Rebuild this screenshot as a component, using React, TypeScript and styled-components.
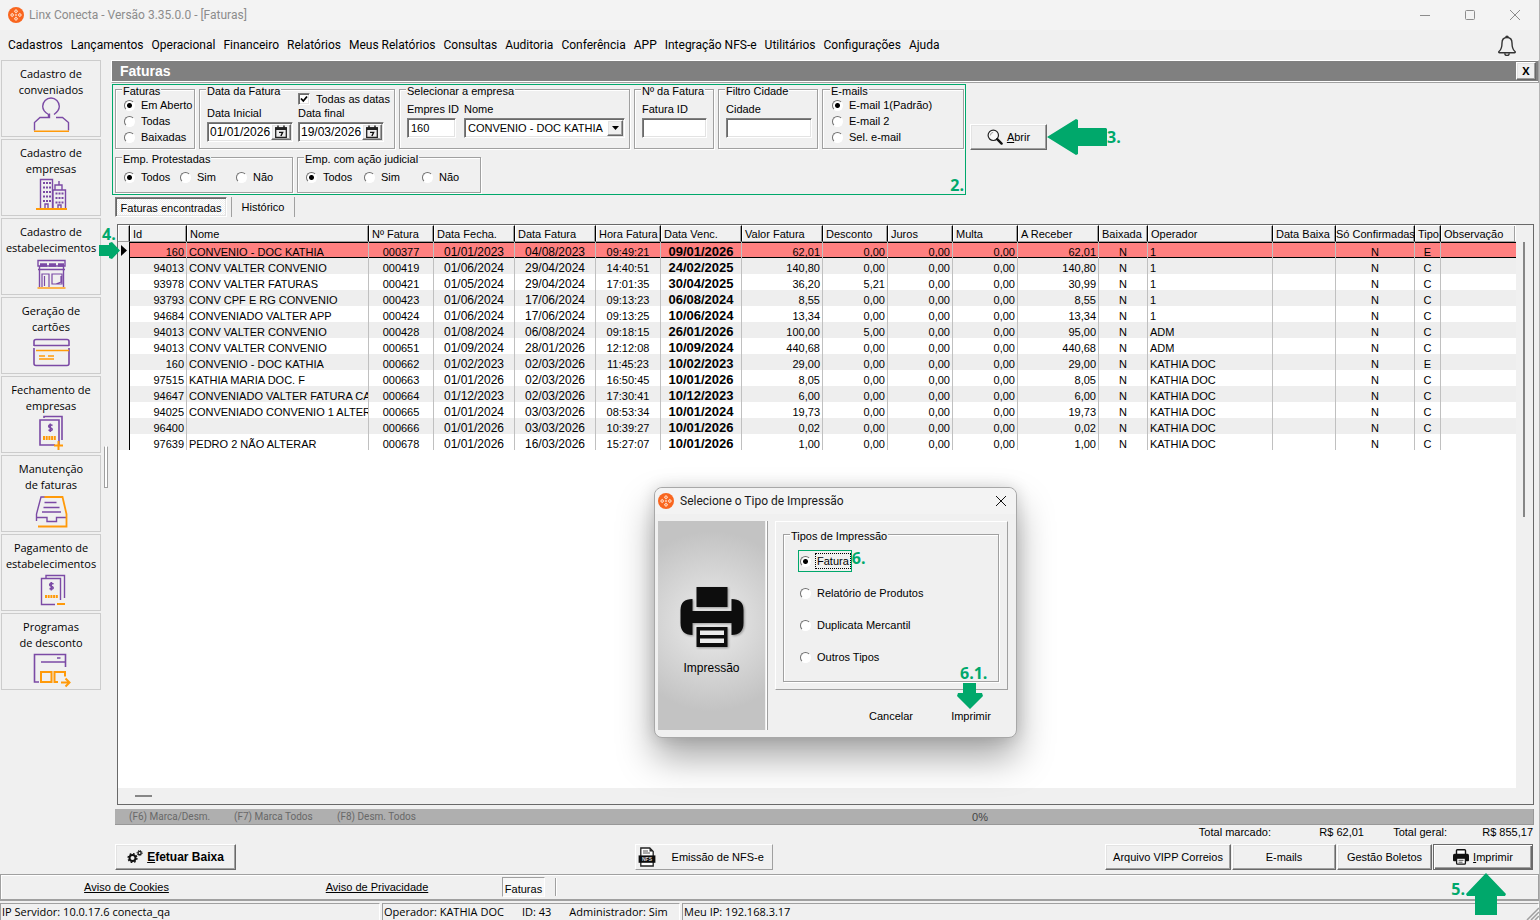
import React from "react";
import styled, { createGlobalStyle, css } from "styled-components";

const UI = `"Liberation Sans", Arial, sans-serif`;
const SEGOE = `"Open Sans", "Noto Sans", sans-serif`;
const CAPTION = `Roboto, "Open Sans", sans-serif`;
const GREEN = "#00a86b";
const FACE = "#f0f0f0";

const Global = createGlobalStyle`
  *, *::before, *::after { box-sizing: border-box; }
  body { margin: 0; background: ${FACE}; color: #000; font: 11px/14px ${UI}; }
  button, input, select { font: inherit; color: inherit; margin: 0; }
`;

const raised = css`
  border: 1px solid;
  border-color: #fff #696969 #696969 #fff;
  box-shadow: inset -1px -1px 0 #a0a0a0, inset 1px 1px 0 #e3e3e3;
`;
const sunken = css`
  border: 1px solid;
  border-color: #808080 #fff #fff #808080;
  box-shadow: inset 1px 1px 0 #696969, inset -1px -1px 0 #e3e3e3;
`;

/* ---------- window frame ---------- */
const Window = styled.div`
  min-height: 100vh;
  display: flex;
  flex-direction: column;
  position: relative;
  border-right: 1px solid #b4b4b4;
  overflow: hidden;
`;
const TitleBar = styled.header`
  height: 30px;
  display: flex;
  align-items: center;
  gap: 5px;
  padding-left: 8px;
  background: #f3f3f3;
  color: #8c8c8c;
  font: 12px/16px ${CAPTION};
`;
const WindowButtons = styled.div`
  margin-left: auto;
  display: flex;
  padding-right: 2px;
`;
const CaptionButton = styled.button`
  width: 45px;
  height: 28px;
  border: 0;
  padding: 0;
  background: none;
  display: grid;
  place-items: center;
`;
const MenuBar = styled.nav`
  height: 30px;
  display: flex;
  align-items: center;
  gap: 8px;
  padding: 0 20px 0 8px;
  font: 12px/16px ${CAPTION};
`;
const MenuItem = styled.a`
  color: #000;
  text-decoration: none;
  white-space: nowrap;
`;
const BellButton = styled.button`
  margin-left: auto;
  border: 0;
  padding: 0;
  width: 24px;
  height: 24px;
  background: none;
`;
const Body = styled.div`
  flex: 1;
  display: flex;
`;

/* ---------- side bar ---------- */
const Side = styled.aside`
  width: 102px;
  padding-left: 1px;
  flex: none;
  display: flex;
  flex-direction: column;
  gap: 2px;
`;
const Tile = styled.button`
  width: 100px;
  height: 77px;
  border: 1px solid #cccccc;
  background: ${FACE};
  padding: 5px 0 0;
  display: flex;
  flex-direction: column;
  align-items: center;
  font: 11px/16px ${SEGOE};
  white-space: pre-line;
  text-align: center;
`;
const TileIcon = styled.svg`
  display: block;
  width: 40px;
  height: 36px;
  flex: none;
  overflow: visible;
  fill: none;
  stroke: #7b4aa5;
  stroke-width: 1.4;
`;
const Splitter = styled.div`
  width: 9px;
  flex: none;
  display: flex;
  align-items: center;
  padding-left: 2px;
  &::before {
    content: "";
    width: 4px;
    height: 42px;
    border: 1px solid;
    border-color: #fff #a0a0a0 #a0a0a0 #a0a0a0;
    background: #fff;
  }
`;

/* ---------- main panel ---------- */
const Main = styled.main`
  flex: 1;
  min-width: 0;
  display: flex;
  flex-direction: column;
  padding-bottom: 4px;
`;
const PanelTitle = styled.div`
  height: 23px;
  border: 1px solid #fff;
  border-right-color: #a0a0a0;
  border-bottom-color: #a0a0a0;
  background: #808080;
  box-shadow: inset 0 -1px 0 #fff;
  display: flex;
  align-items: center;
  justify-content: space-between;
  padding: 0 2px 1px 8px;
`;
const PanelHeading = styled.h1`
  margin: 0;
  font: bold 14px/18px ${UI};
  color: #fff;
`;
const CloseBox = styled.button`
  ${raised}
  width: 20px;
  height: 18px;
  padding: 0;
  background: ${FACE};
  font: bold 11px/14px ${SEGOE};
`;
const FilterRow = styled.div`
  display: flex;
  align-items: flex-start;
  padding: 1px 0 0 1px;
`;
const FilterBox = styled.section`
  position: relative;
  border: 1px solid ${GREEN};
  padding: 0 1px 1px 2px;
  height: 111px;
  display: flex;
  flex-direction: column;
  gap: 4px;
`;
const Groups = styled.div`
  display: flex;
  gap: 4px;
`;
const Group = styled.fieldset<{ $w?: number; $h: number; $top?: number; $left?: number }>`
  margin: 0;
  min-width: 0;
  width: ${(p) => (p.$w ? p.$w + "px" : "100%")};
  height: ${(p) => p.$h}px;
  border: 1px solid #a0a0a0;
  box-shadow: 1px 1px 0 #fff, inset 1px 1px 0 #fff;
  padding: ${(p) => p.$top ?? 0}px 0 0 ${(p) => p.$left ?? 7}px;
`;
const Legend = styled.legend<{ $left?: number }>`
  height: 8px;
  line-height: 12px;
  padding: 0 1px;
  margin-left: ${(p) => p.$left ?? -1}px;
  background: ${FACE};
  white-space: nowrap;
`;
const RadioCol = styled.div`
  display: flex;
  flex-direction: column;
`;
const RadioRow = styled.div<{ $step: number }>`
  display: grid;
  grid-template-columns: ${(p) => p.$step}px ${(p) => p.$step}px auto;
`;
const RadioLabel = styled.label`
  display: flex;
  align-items: center;
  gap: 6px;
  height: 16px;
  white-space: nowrap;
`;
const RadioInput = styled.input`
  appearance: none;
  width: 11px;
  height: 11px;
  flex: none;
  border: 1px solid;
  border-color: #707070 #fff #fff #707070;
  border-radius: 50%;
  background: #fff;
  &:checked {
    background: radial-gradient(circle, #000 0 2px, #fff 3px);
  }
`;
const CheckLabel = styled.label`
  display: flex;
  align-items: center;
  gap: 6px;
  height: 12px;
  white-space: nowrap;
  position: relative;
  & > svg {
    position: absolute;
    left: 2px;
    top: 2px;
    pointer-events: none;
  }
`;
const CheckInput = styled.input`
  ${sunken}
  appearance: none;
  flex: none;
  width: 12px;
  height: 12px;
  background: #fff;
`;
const Fields = styled.div<{ $gap: number }>`
  display: flex;
  align-items: flex-end;
  gap: ${(p) => p.$gap}px;
`;
const Field = styled.div<{ $w: number }>`
  width: ${(p) => p.$w}px;
  display: flex;
  flex-direction: column;
  gap: 1px;
`;
const FieldLabel = styled.label`
  line-height: 15px;
  white-space: nowrap;
`;
const TextInput = styled.input`
  ${sunken}
  width: 100%;
  height: 20px;
  padding: 0 3px;
  background: #fff;
  outline: 0;
`;
const DateBox = styled.div`
  ${sunken}
  height: 20px;
  display: flex;
  background: #fff;
  padding: 1px;
`;
const DateInput = styled.input`
  flex: 1;
  min-width: 0;
  border: 0;
  padding: 0 0 0 1px;
  background: none;
  outline: 0;
  font-size: 12px;
`;
const DateButton = styled.button`
  ${raised}
  width: 20px;
  padding: 0;
  background: ${FACE};
  display: grid;
  place-items: center;
`;
const SelectBox = styled.div`
  ${sunken}
  position: relative;
  height: 20px;
  background: #fff;
`;
const Select = styled.select`
  appearance: none;
  border: 0;
  width: 100%;
  height: 18px;
  padding: 0 18px 0 3px;
  background: none;
  outline: 0;
`;
const DropArrow = styled.span`
  ${raised}
  position: absolute;
  right: 1px;
  top: 1px;
  width: 16px;
  height: 16px;
  background: ${FACE};
  display: grid;
  place-items: center;
  pointer-events: none;
`;
const Mark = styled.span`
  color: ${GREEN};
  font: bold 16px/16px ${SEGOE};
`;
const BoxMark = styled(Mark)`
  position: absolute;
  right: 1px;
  bottom: 1px;
`;
const OpenArea = styled.div`
  display: flex;
  align-items: center;
  padding: 35px 0 0 4px;
`;
const Button = styled.button<{ $w?: number; $bold?: boolean; $flat?: boolean; $default?: boolean }>`
  ${raised}
  ${(p) => p.$flat && css`border-color: #fff #a0a0a0 #a0a0a0 #fff; box-shadow: none;`}
  ${(p) => p.$default && css`border-color: #696969; box-shadow: inset 1px 1px 0 #fff, inset -1px -1px 0 #696969, inset -2px -2px 0 #a0a0a0;`}
  width: ${(p) => p.$w}px;
  height: 26px;
  padding: 0 ${(p) => (p.$flat ? 6 : 0)}px 0 0;
  background: ${FACE};
  display: flex;
  align-items: center;
  justify-content: center;
  gap: 4px;
  white-space: nowrap;
  font: ${(p) => (p.$bold ? "bold 12px" : "11px")}/14px ${UI};
`;

/* ---------- tabs ---------- */
const Tabs = styled.div`
  height: 29px;
  padding: 2px 0 7px 4px;
  display: flex;
`;
const Tab = styled.button<{ $active?: boolean }>`
  border: 0;
  padding: ${(p) => (p.$active ? "2px 0 0" : "0")};
  width: ${(p) => (p.$active ? 112 : 64)}px;
  margin-right: ${(p) => (p.$active ? 4 : 0)}px;
  background: ${FACE};
  white-space: nowrap;
  border-left: 1px solid #a0a0a0;
  border-right: 1px solid #a0a0a0;
  ${(p) =>
    p.$active &&
    css`
      ${sunken}
      background: repeating-conic-gradient(#fff 0 25%, #f0f0f0 0 50%) 0 0 / 2px 2px;
    `}
`;

/* ---------- grid ---------- */
const GridFrame = styled.div`
  position: relative;
  margin: 0 5px 0 6px;
  flex: 1;
  border: 1px solid #696969;
  display: grid;
  grid-template: 1fr 16px / minmax(0, 1fr) 17px;
  background: ${FACE};
`;
const GridView = styled.div`
  background: #fff;
  overflow: hidden;
`;
const VScroll = styled.div`
  padding: 17px 0 0 7px;
  &::before {
    content: "";
    display: block;
    width: 2px;
    height: 275px;
    background: #868686;
  }
`;
const HScroll = styled.div`
  padding: 7px 0 0 17px;
  &::before {
    content: "";
    display: block;
    width: 17px;
    height: 2px;
    background: #868686;
  }
`;
const Table = styled.table`
  width: 100%;
  table-layout: fixed;
  border-collapse: separate;
  border-spacing: 0;
`;
const Th = styled.th<{ $tight?: boolean }>`
  height: 17px;
  padding: 0 0 0 ${(p) => (p.$tight ? 0 : 3)}px;
  background: ${FACE};
  border-right: 1px solid #000;
  border-bottom: 1px solid #a0a0a0;
  border-top: 1px solid #fff;
  box-shadow: inset 1px 0 0 #fff, inset -1px 0 0 #a0a0a0;
  font: 11px/14px ${UI};
  text-align: left;
  white-space: nowrap;
  overflow: hidden;
  &:last-child {
    border-right-color: #fff;
  }
`;
const Tr = styled.tr<{ $selected?: boolean }>`
  background: ${(p) => (p.$selected ? "#ff8080" : "#fff")};
  &:nth-child(even) {
    background: #eeeeee;
  }
  & > td + td {
    ${(p) => p.$selected && css`box-shadow: inset 0 1px 0 #000, inset 0 -1px 0 #000;`}
  }
`;
const Td = styled.td<{ $align?: string; $kind?: string }>`
  height: 16px;
  padding: 4px ${(p) => (p.$align ? 2 : 0)}px 0 2px;
  border-right: 1px solid #c0c0c0;
  text-align: ${(p) => p.$align ?? "left"};
  font-size: ${(p) => (p.$kind === "due" ? 13 : p.$kind === "date" ? 12 : 11)}px;
  font-weight: ${(p) => (p.$kind === "due" ? "bold" : "normal")};
  line-height: 12px;
  white-space: nowrap;
  overflow: hidden;
  &:last-child {
    border-right: 0;
  }
`;
const Marker = styled.td`
  height: 16px;
  padding: 0 0 0 3px;
  background: ${FACE};
  border-right: 1px solid #000;
  line-height: 0;
`;

/* ---------- bottom ---------- */
const KeysBar = styled.div`
  margin: 4px 5px 0 4px;
  height: 16px;
  background: #afafaf;
  border-bottom: 1px solid #989898;
  border-right: 1px solid #989898;
  display: flex;
  align-items: center;
  color: #686868;
  font: 10px/14px ${CAPTION};
`;
const KeyHint = styled.span<{ $w: number }>`
  width: ${(p) => p.$w}px;
  white-space: nowrap;
  &:first-child {
    margin-left: 14px;
  }
`;
const Percent = styled.span`
  flex: 1;
  text-align: center;
  color: #444;
  font: 11px/14px ${UI};
`;
const Totals = styled.div`
  height: 19px;
  padding: 0 6px 5px 0;
  display: flex;
  align-items: center;
  justify-content: flex-end;
`;
const Total = styled.span<{ $w: number }>`
  width: ${(p) => p.$w}px;
  text-align: right;
  white-space: nowrap;
`;
const Actions = styled.div`
  display: grid;
  grid-template-columns: 121px 6fr 138px 5fr auto;
  padding: 0 6px 0 4px;
  & > :nth-child(2) {
    grid-column: 3;
  }
  & > :nth-child(3) {
    grid-column: 5;
  }
`;
const ActionSet = styled.div`
  display: flex;
  gap: 1px;
  position: relative;
  z-index: 1;
`;
const EmissionIcon = styled.span`
  display: flex;
  margin-right: 12px;
`;
const NoticeBar = styled.footer`
  height: 26px;
  border: 1px solid #a0a0a0;
  box-shadow: inset 1px 1px 0 #fff;
  display: flex;
  align-items: center;
`;
const NoticeSlot = styled.div<{ $w: number }>`
  width: ${(p) => p.$w}px;
  text-align: center;
`;
const NoticeLink = styled.a`
  color: #000;
  text-decoration: underline;
`;
const OpenWindow = styled.button`
  width: 43px;
  height: 20px;
  padding: 3px 0 0;
  border: 1px solid;
  border-color: #a0a0a0 #fff #fff #a0a0a0;
  background: #f7f7f7;
`;
const Divider = styled.span`
  width: 2px;
  height: 18px;
  margin-left: 10px;
  background: linear-gradient(90deg, #a0a0a0 50%, #fff 50%);
`;
const StatusBar = styled.div`
  height: 20px;
  border-top: 1px solid #a0a0a0;
  padding-top: 2px;
  display: flex;
  gap: 2px;
  position: relative;
  font: 11px/16px ${SEGOE};
  & > svg {
    position: absolute;
    right: 0;
    bottom: 0;
  }
`;
const StatusCell = styled.div<{ $w?: number }>`
  ${(p) => (p.$w ? `width: ${p.$w}px;` : "flex: 1;")}
  border: 1px solid #a0a0a0;
  border-right-color: #fff;
  border-bottom: 0;
  padding-left: 1px;
  display: flex;
  gap: 18px;
  white-space: nowrap;
`;

/* ---------- print dialog ---------- */
const Dialog = styled.div`
  position: absolute;
  left: 654px;
  top: 487px;
  width: 363px;
  height: 251px;
  border: 1px solid #a8a8a8;
  border-radius: 8px;
  background: ${FACE};
  box-shadow: 0 20px 36px rgba(0, 0, 0, 0.34), 0 0 16px rgba(0, 0, 0, 0.14);
  display: flex;
  flex-direction: column;
`;
const DialogTitle = styled.div`
  height: 26px;
  flex: none;
  border-radius: 8px 8px 0 0;
  background: #f3f3f3;
  display: flex;
  align-items: center;
  gap: 6px;
  padding: 0 0 0 3px;
  color: #1a1a1a;
  font: 12px/16px ${CAPTION};
`;
const DialogClose = styled(CaptionButton)`
  margin-left: auto;
  width: 30px;
  height: 26px;
`;
const DialogBody = styled.div`
  flex: 1;
  display: flex;
  padding: 7px 8px 7px 3px;
`;
const DialogArt = styled.div`
  width: 107px;
  flex: none;
  background: radial-gradient(circle at 50% 48%, #ececec 0, #dcdcdc 35px, #c3c3c3 90px);
  display: flex;
  flex-direction: column;
  align-items: center;
  gap: 10px;
  padding-top: 65px;
  font: 12px/16px ${UI};
`;
const DialogRule = styled.div`
  width: 2px;
  flex: none;
  margin: 0 7px 0 1px;
  background: linear-gradient(90deg, #fff 50%, #a0a0a0 50%);
`;
const DialogRight = styled.div`
  flex: 1;
  min-width: 0;
`;
const DialogPanel = styled.div`
  height: 169px;
  border: 1px solid;
  border-color: #fff #a0a0a0 #a0a0a0 #fff;
  padding: 8px 8px 0 7px;
`;
const Options = styled.div`
  display: flex;
  flex-direction: column;
  align-items: flex-start;
  gap: 10px;
`;
const OptionFrame = styled.div<{ $on?: boolean }>`
  height: 22px;
  padding: 2px 0 2px 1px;
  border: 1px solid ${(p) => (p.$on ? GREEN : "transparent")};
`;
const OptionText = styled.span<{ $on?: boolean }>`
  padding: 0 1px;
  margin-left: -2px;
  line-height: 14px;
  border: 1px dotted ${(p) => (p.$on ? "#000" : "transparent")};
`;
const OptionLine = styled.div`
  display: flex;
  align-items: flex-start;
`;
const DialogButtons = styled.div`
  display: flex;
  justify-content: flex-end;
  gap: 6px;
  padding-top: 14px;
`;
const FlatButton = styled.button`
  width: 74px;
  height: 24px;
  border: 0;
  padding: 0;
  background: none;
`;
const PrintMark = styled.div`
  position: absolute;
  left: 302px;
  top: 177px;
  display: flex;
  flex-direction: column;
  gap: 2px;
  & > span {
    padding-left: 3px;
  }
`;
const RowMark = styled.div`
  position: absolute;
  left: 98px;
  top: 226px;
  display: flex;
  flex-direction: column;
  & > span {
    padding-left: 4px;
  }
`;
const FinalMark = styled.div`
  position: absolute;
  right: 27px;
  top: 29px;
  display: flex;
  align-items: flex-start;
  gap: 1px;
  & > span {
    padding-top: 8px;
  }
`;

/* ---------- drawings ---------- */
const Logo = () => (
  <svg width="16" height="16" viewBox="0 0 16 16" aria-hidden="true">
    <circle cx="8" cy="8" r="8" fill="#f9661f" />
    <g fill="#ffd9c2">
      <path d="M8 2 10.200 4.200 8 6.400 5.800 4.200zM8 9.600 10.200 11.800 8 14 5.800 11.800zM4.200 5.800 6.400 8 4.200 10.200 2 8zM11.800 5.800 14 8 11.800 10.200 9.600 8z" />
      <circle cx="8" cy="8" r=".9" />
    </g>
    <g fill="#f9661f">
      <circle cx="8" cy="4.200" r=".7" />
      <circle cx="8" cy="11.800" r=".7" />
      <circle cx="4.200" cy="8" r=".7" />
      <circle cx="11.800" cy="8" r=".7" />
    </g>
  </svg>
);
const Calendar = () => (
  <svg width="14" height="14" viewBox="0 0 14 14" aria-hidden="true">
    <path d="M1.700 3h10.600v9.300H1.700z" fill="#eee" stroke="#222" strokeWidth="1.300" />
    <path d="M1 2.300h12v2.700H1z" fill="#222" />
    <path d="M4 .5v3M10 .5v3" stroke="#222" strokeWidth="1.500" />
    <path d="M5 7.400h3.600L6.900 11" fill="none" stroke="#111" strokeWidth="1.400" />
  </svg>
);
const Magnifier = () => (
  <svg width="16" height="16" viewBox="0 0 16 16" fill="none" aria-hidden="true">
    <circle cx="6.3" cy="6.3" r="5.2" fill="#f8f8f8" stroke="#222" strokeWidth="1.2" />
    <path d="M3.4 6.4a3 3 0 0 1 2.8-3" stroke="#999" />
    <path d="M10.2 10.2l4.4 4.4" stroke="#111" strokeWidth="2.4" strokeLinecap="round" />
  </svg>
);
const Gears = () => (
  <svg width="16" height="16" viewBox="0 0 16 16" fill="none" stroke="#111" aria-hidden="true">
    <circle cx="5.5" cy="9" r="3" strokeWidth="2" />
    <circle cx="5.5" cy="9" r="4.4" strokeWidth="1.4" strokeDasharray="1.7 1.75" />
    <circle cx="12.6" cy="4" r="1.6" strokeWidth="1.3" />
    <circle cx="12.6" cy="4" r="2.6" strokeWidth="1" strokeDasharray="1 1.04" />
  </svg>
);
const NfsIcon = () => (
  <svg width="18" height="20" viewBox="0 0 18 20" aria-hidden="true">
    <path d="M2.8 1h9l3.4 3.4V19H2.8z" fill="#fff" stroke="#222" strokeWidth="1.3" />
    <path d="M11.5 1v3.6h3.6z" fill="#222" />
    <path d="M5 4h5M5 6h7" stroke="#555" />
    <path d="M.6 8.4h16.8v7.4H.6z" fill="#0c0c0c" />
    <text x="9" y="14" fill="#ddd" fontFamily="Liberation Sans" fontSize="5" fontWeight="bold" textAnchor="middle">NFS</text>
  </svg>
);
const SmallPrinter = () => (
  <svg width="16" height="16" viewBox="0 0 16 16" aria-hidden="true">
    <path d="M3.5 5V1.6q0-.9.9-.9h7.2q.9 0 .9.9V5" fill="#fff" stroke="#111" strokeWidth="1.4" />
    <path d="M1.6 4.8h12.8q1.6 0 1.6 1.8v4.6q0 1-1 1H1q-1 0-1-1V6.6q0-1.800 1.6-1.800z" fill="#111" />
    <path d="M3.6 9.200h8.800v5q0 1-1 1H4.600q-1 0-1-1z" fill="#fff" stroke="#111" strokeWidth="1.300" />
    <path d="M5.500 11.300h5M5.500 13.200h4" stroke="#555" />
  </svg>
);
const PrinterDrawing = styled.svg`
  filter: drop-shadow(1px 1px 1px rgba(0, 0, 0, 0.35));
`;
const BigPrinter = () => (
  <PrinterDrawing width="66" height="64" viewBox="0 0 66 64" aria-hidden="true">
    <g fill="#0d0d0d">
      <path d="M17.500 1h31v20h-31z" />
      <path d="M13.500 13v12h39V13q12 0 12 11v13q0 12-12 12V37h-39v12q-12 0-12-12V24q0-11 12-11z" />
      <path d="M17.500 41h31v20h-31z" />
    </g>
    <path d="M21 44.500h24v4.500H21zM21 52.500h24v4.500H21z" fill="#ececec" />
  </PrinterDrawing>
);
const Bell = () => (
  <svg width="24" height="24" viewBox="0 0 24 24" fill="none" stroke="#333" strokeWidth="1.4" aria-hidden="true">
    <path d="M4 18.500c2.500-2 3-4 3-8.500 0-3.500 2-5.500 5-5.500s5 2 5 5.500c0 4.500.5 6.500 3 8.500.6.600.2 1.300-.6 1.300H4.600c-.8 0-1.200-.7-.6-1.300z" />
    <path d="M10.800 4.400a1.200 1.200 0 1 1 2.400 0M9.800 20.200a2.200 2.200 0 0 0 4.400 0" />
  </svg>
);
const Close = ({ color }: { color: string }) => (
  <svg width="12" height="12" viewBox="0 0 12 12" stroke={color} fill="none" aria-hidden="true">
    <path d="M1 1l10 10M11 1L1 11" />
  </svg>
);

const O = "#ff9a0a";
const icons: React.ReactNode[] = [
  <>
    <path d="M17.500 19.500v-3C14 14.500 11.700 12 11.700 8.300a8.300 8.300 0 0 1 16.600 0c0 4-3.300 6.800-5.300 8.200M18.500 15.500v4H9l-5.500 5v8M25 19.500h6.500l6 5v8" />
    <path d="M3 33.300h35" stroke={O} />
  </>,
  <>
    <path d="M9.500 31V2.500h12V31M22 31V13h12.500v18M24 12.500V8h7v4.500M28 8V4" />
    <path d="M12 6h8M12 10.500h8M12 15h8M12 19.500h8M12 24h8" strokeWidth="2.200" strokeDasharray="2 1" />
    <path d="M24.500 16.500h8M24.500 21h8M24.500 25.500h8" strokeWidth="2.200" strokeDasharray="2 1" />
    <path d="M14 31v-4h3v4M27 31v-3h3v3" />
    <path d="M5 32h31" stroke={O} strokeWidth="2" />
  </>,
  <>
    <path d="M7 4.500h27v5.500H7zM8.500 10v21M32.500 10v21M7 13.500h27" />
    <path d="M9 9h24" strokeWidth="3.500" strokeDasharray="7 2" />
    <path d="M11 31V18h7v13M13.500 20v10M21 18h10v10H21zM30 20v6l-5 2" strokeWidth="1.200" />
    <path d="M6.500 32h28" stroke={O} />
  </>,
  <>
    <path d="M3 11V6.500Q3 4.500 5 4.500h31q2 0 2 2V11M3 13v15.500q0 2 2 2h31q2 0 2-2V13M3 10.500h35" strokeWidth="1.600" />
    <path d="M5 15.500h33" stroke={O} />
    <path d="M8 21h6M17 21h6M8 24h15" stroke={O} />
  </>,
  <>
    <path d="M13 4V2.500h18V26M24 31H9V6h19v25" strokeWidth="1.600" />
    <path d="M21.500 11.500c-4-2-5 1.600-2.300 2.300s3 4-1.700 2.200M19.300 9.500v8.500" strokeWidth="1.500" />
    <path d="M12 24h13" stroke={O} strokeWidth="4" strokeDasharray="2 .7" />
    <path d="M23 31.500h9M27.500 27v9" stroke={O} strokeWidth="2" />
  </>,
  <>
    <path d="M5.500 28v-7L10 4h5M13.500 9.500h12M12.500 14.500h16M11 19h19M5.500 24.500H16v4h9.500v-4H35" />
    <path d="M13.500 4h18l4 17v12.500H7" stroke={O} strokeWidth="1.800" />
  </>,
  <>
    <path d="M15 6V3.500h18.500V26M24 32.500H10.500V6.500h19V28" />
    <path d="M22.500 12c-4-2-5 1.600-2.300 2.300s3 4-1.700 2.200M20.300 10v8.500" strokeWidth="1.500" />
    <path d="M14 24.500h13" stroke={O} strokeWidth="3" strokeDasharray="2 .7" />
    <path d="M26 32h8" stroke={O} strokeWidth="2" />
  </>,
  <>
    <path d="M8 31H3.500V3.500h31V16M10 11h24.500M26 7h3.500" strokeWidth="1.600" />
    <path d="M10 21h10.500v10H10zM27 31h-3.500V21h10.500v4.500M30 31.500h8M34.500 27.500l4 4-4 4" stroke={O} strokeWidth="2" />
  </>,
];

/* ---------- data ---------- */
const menus = ["Cadastros", "Lançamentos", "Operacional", "Financeiro", "Relatórios", "Meus Relatórios", "Consultas", "Auditoria", "Conferência", "APP", "Integração NFS-e", "Utilitários", "Configurações", "Ajuda"];
const tiles = [
  "Cadastro de\nconveniados",
  "Cadastro de\nempresas",
  "Cadastro de\nestabelecimentos",
  "Geração de\ncartões",
  "Fechamento de\nempresas",
  "Manutenção\nde faturas",
  "Pagamento de\nestabelecimentos",
  "Programas\nde desconto",
];
type Column = { title: string; w?: number; align?: string; kind?: string; tight?: boolean };
const columns: Column[] = [
  { title: "Id", w: 57, align: "right" },
  { title: "Nome", w: 182 },
  { title: "Nº Fatura", w: 65, align: "center" },
  { title: "Data Fecha.", w: 81, align: "center", kind: "date" },
  { title: "Data Fatura", w: 81, align: "center", kind: "date" },
  { title: "Hora Fatura", w: 65, align: "center" },
  { title: "Data Venc.", w: 81, align: "center", kind: "due" },
  { title: "Valor Fatura", w: 81, align: "right" },
  { title: "Desconto", w: 65, align: "right" },
  { title: "Juros", w: 65, align: "right" },
  { title: "Multa", w: 65, align: "right" },
  { title: "A Receber", w: 81, align: "right" },
  { title: "Baixada", w: 49, align: "center" },
  { title: "Operador", w: 125 },
  { title: "Data Baixa", w: 63 },
  { title: "Só Confirmadas", w: 79, align: "center", tight: true },
  { title: "Tipo", w: 26, align: "center" },
  { title: "Observação" },
];
const row = (id: string, nome: string, num: string, fecha: string, data: string, hora: string, venc: string, valor: string, desc: string, receber: string, oper: string, tipo: string) =>
  [id, nome, num, fecha, data, hora, venc, valor, desc, "0,00", "0,00", receber, "N", oper, "", "N", tipo, ""];
const rows = [
  row("160", "CONVENIO - DOC KATHIA", "000377", "01/01/2023", "04/08/2023", "09:49:21", "09/01/2026", "62,01", "0,00", "62,01", "1", "E"),
  row("94013", "CONV VALTER CONVENIO", "000419", "01/06/2024", "29/04/2024", "14:40:51", "24/02/2025", "140,80", "0,00", "140,80", "1", "C"),
  row("93978", "CONV VALTER FATURAS", "000421", "01/05/2024", "29/04/2024", "17:01:35", "30/04/2025", "36,20", "5,21", "30,99", "1", "C"),
  row("93793", "CONV CPF E RG CONVENIO", "000423", "01/06/2024", "17/06/2024", "09:13:23", "06/08/2024", "8,55", "0,00", "8,55", "1", "C"),
  row("94684", "CONVENIADO VALTER APP", "000424", "01/06/2024", "17/06/2024", "09:13:25", "10/06/2024", "13,34", "0,00", "13,34", "1", "C"),
  row("94013", "CONV VALTER CONVENIO", "000428", "01/08/2024", "06/08/2024", "09:18:15", "26/01/2026", "100,00", "5,00", "95,00", "ADM", "C"),
  row("94013", "CONV VALTER CONVENIO", "000651", "01/09/2024", "28/01/2026", "12:12:08", "10/09/2024", "440,68", "0,00", "440,68", "ADM", "C"),
  row("160", "CONVENIO - DOC KATHIA", "000662", "01/02/2023", "02/03/2026", "11:45:23", "10/02/2023", "29,00", "0,00", "29,00", "KATHIA DOC", "E"),
  row("97515", "KATHIA MARIA DOC. F", "000663", "01/01/2026", "02/03/2026", "16:50:45", "10/01/2026", "8,05", "0,00", "8,05", "KATHIA DOC", "C"),
  row("94647", "CONVENIADO VALTER FATURA CA", "000664", "01/12/2023", "02/03/2026", "17:30:41", "10/12/2023", "6,00", "0,00", "6,00", "KATHIA DOC", "C"),
  row("94025", "CONVENIADO CONVENIO 1 ALTERA", "000665", "01/01/2024", "03/03/2026", "08:53:34", "10/01/2024", "19,73", "0,00", "19,73", "KATHIA DOC", "C"),
  row("96400", "", "000666", "01/01/2026", "03/03/2026", "10:39:27", "10/01/2026", "0,02", "0,00", "0,02", "KATHIA DOC", "C"),
  row("97639", "PEDRO 2 NÃO ALTERAR", "000678", "01/01/2026", "16/03/2026", "15:27:07", "10/01/2026", "1,00", "0,00", "1,00", "KATHIA DOC", "C"),
];

const Radio = ({ name, text, on }: { name: string; text: string; on?: boolean }) => (
  <RadioLabel>
    <RadioInput type="radio" name={name} defaultChecked={on} />
    {text}
  </RadioLabel>
);
const DateField = ({ id, label, value }: { id: string; label: string; value: string }) => (
  <>
    <FieldLabel htmlFor={id}>{label}</FieldLabel>
    <DateBox>
      <DateInput id={id} defaultValue={value} />
      <DateButton type="button" aria-label="Calendário"><Calendar /></DateButton>
    </DateBox>
  </>
);

export default function App() {
  return (
    <Window>
      <Global />
      <TitleBar>
        <Logo />
        <span>Linx Conecta - Versão 3.35.0.0 - [Faturas]</span>
        <WindowButtons>
          <CaptionButton aria-label="Minimizar">
            <svg width="12" height="12" stroke="#8c8c8c"><path d="M1 6.500h10" /></svg>
          </CaptionButton>
          <CaptionButton aria-label="Maximizar">
            <svg width="12" height="12" stroke="#8c8c8c" fill="none"><rect x="1.500" y="1.500" width="9" height="9" rx="1" /></svg>
          </CaptionButton>
          <CaptionButton aria-label="Fechar"><Close color="#8c8c8c" /></CaptionButton>
        </WindowButtons>
      </TitleBar>
      <MenuBar>
        {menus.map((m) => <MenuItem key={m} href="#">{m}</MenuItem>)}
        <BellButton aria-label="Notificações"><Bell /></BellButton>
      </MenuBar>

      <Body>
        <Side>
          {tiles.map((t, i) => (
            <Tile key={t}>
              {t}
              <TileIcon viewBox="0 0 40 36">{icons[i]}</TileIcon>
            </Tile>
          ))}
        </Side>
        <Splitter />
        <Main>
          <PanelTitle>
            <PanelHeading>Faturas</PanelHeading>
            <CloseBox aria-label="Fechar Faturas">X</CloseBox>
          </PanelTitle>
          <FilterRow>
            <FilterBox>
              <Groups>
                <Group $w={80} $h={64} $top={4} $left={8}>
                  <Legend $left={-2}>Faturas</Legend>
                  <RadioCol>
                    <Radio name="situacao" text="Em Aberto" on />
                    <Radio name="situacao" text="Todas" />
                    <Radio name="situacao" text="Baixadas" />
                  </RadioCol>
                </Group>
                <Group $w={196} $h={64}>
                  <Legend>Data da Fatura</Legend>
                  <Fields $gap={5}>
                    <Field $w={86}>
                      <DateField id="inicio" label="Data Inicial" value="01/01/2026" />
                    </Field>
                    <Field $w={86}>
                      <CheckLabel>
                        <CheckInput type="checkbox" defaultChecked />
                        <svg width="8" height="8" fill="none" stroke="#000" strokeWidth="1.800"><path d="M1 3.500l2.300 2.500L7 1.500" /></svg>
                        Todas as datas
                      </CheckLabel>
                      <DateField id="fim" label="Data final" value="19/03/2026" />
                    </Field>
                  </Fields>
                </Group>
                <Group $w={231} $h={64} $top={9}>
                  <Legend>Selecionar a empresa</Legend>
                  <Fields $gap={8}>
                    <Field $w={49}>
                      <FieldLabel htmlFor="empresa">Empres ID</FieldLabel>
                      <TextInput id="empresa" defaultValue="160" />
                    </Field>
                    <Field $w={161}>
                      <FieldLabel htmlFor="nome">Nome</FieldLabel>
                      <SelectBox>
                        <Select id="nome"><option>CONVENIO - DOC KATHIA</option></Select>
                        <DropArrow><svg width="7" height="4"><path d="M0 0h7L3.500 4z" /></svg></DropArrow>
                      </SelectBox>
                    </Field>
                  </Fields>
                </Group>
                <Group $w={80} $h={64} $top={9}>
                  <Legend>Nº da Fatura</Legend>
                  <Field $w={65}>
                    <FieldLabel htmlFor="fatura">Fatura ID</FieldLabel>
                    <TextInput id="fatura" />
                  </Field>
                </Group>
                <Group $w={100} $h={64} $top={9}>
                  <Legend>Filtro Cidade</Legend>
                  <Field $w={86}>
                    <FieldLabel htmlFor="cidade">Cidade</FieldLabel>
                    <TextInput id="cidade" />
                  </Field>
                </Group>
                <Group $w={142} $h={64} $top={4} $left={9}>
                  <Legend $left={-2}>E-mails</Legend>
                  <RadioCol>
                    <Radio name="email" text="E-mail 1(Padrão)" on />
                    <Radio name="email" text="E-mail 2" />
                    <Radio name="email" text="Sel. e-mail" />
                  </RadioCol>
                </Group>
              </Groups>
              <Groups>
                <Group $w={178} $h={40} $top={8} $left={8}>
                  <Legend $left={-2}>Emp. Protestadas</Legend>
                  <RadioRow $step={56}>
                    <Radio name="protesto" text="Todos" on />
                    <Radio name="protesto" text="Sim" />
                    <Radio name="protesto" text="Não" />
                  </RadioRow>
                </Group>
                <Group $w={184} $h={40} $top={8} $left={8}>
                  <Legend $left={-2}>Emp. com ação judicial</Legend>
                  <RadioRow $step={58}>
                    <Radio name="judicial" text="Todos" on />
                    <Radio name="judicial" text="Sim" />
                    <Radio name="judicial" text="Não" />
                  </RadioRow>
                </Group>
              </Groups>
              <BoxMark>2.</BoxMark>
            </FilterBox>
            <OpenArea>
              <Button $w={77}><Magnifier /><span><u>A</u>brir</span></Button>
              <svg width="60" height="36" fill={GREEN} aria-hidden="true"><path d="M0 18L29 0l2 1v8h28l1 1v17H31v8l-2 1z" /></svg>
              <Mark>3.</Mark>
            </OpenArea>
          </FilterRow>

          <Tabs>
            <Tab $active>Faturas encontradas</Tab>
            <Tab>Histórico</Tab>
          </Tabs>

          <GridFrame>
            <GridView>
              <Table>
                <colgroup>
                  <col width={12} />
                  {columns.map((c) => <col key={c.title} width={c.w} />)}
                </colgroup>
                <thead>
                  <tr>
                    <Th aria-label="Linha atual" />
                    {columns.map((c) => <Th key={c.title} $tight={c.tight}>{c.title}</Th>)}
                  </tr>
                </thead>
                <tbody>
                  {rows.map((r, i) => (
                    <Tr key={r[2]} $selected={i === 0}>
                      <Marker>
                        {i === 0 && <svg width="7" height="11"><path d="M0 0l6 5.500L0 11z" /></svg>}
                      </Marker>
                      {r.map((v, c) => <Td key={c} $align={columns[c].align} $kind={columns[c].kind}>{v}</Td>)}
                    </Tr>
                  ))}
                </tbody>
              </Table>
            </GridView>
            <VScroll />
            <HScroll />
          </GridFrame>

          <KeysBar>
            <KeyHint $w={105}>(F6) Marca/Desm.</KeyHint>
            <KeyHint $w={103}>(F7) Marca Todos</KeyHint>
            <KeyHint $w={90}>(F8) Desm. Todos</KeyHint>
            <Percent>0%</Percent>
          </KeysBar>
          <Totals>
            <Total $w={80}>Total marcado:</Total>
            <Total $w={93}>R$ 62,01</Total>
            <Total $w={83}>Total geral:</Total>
            <Total $w={86}>R$ 855,17</Total>
          </Totals>
          <Actions>
            <Button $w={121} $bold><Gears /><span><u>E</u>fetuar Baixa</span></Button>
            <Button $w={138} $flat><EmissionIcon><NfsIcon /></EmissionIcon>Emissão de NFS-e</Button>
            <ActionSet>
              <Button $w={126}>Arquivo VIPP Correios</Button>
              <Button $w={104}>E-mails</Button>
              <Button $w={95}>Gestão Boletos</Button>
              <Button $w={100} $default><SmallPrinter /><span><u>I</u>mprimir</span></Button>
              <FinalMark>
                <Mark>5.</Mark>
                <svg width="40" height="42" fill={GREEN} aria-hidden="true"><path d="M20 0l20 21-1 2H31v19H9V23H1l-1-2z" /></svg>
              </FinalMark>
            </ActionSet>
          </Actions>
        </Main>
      </Body>

      <NoticeBar>
        <NoticeSlot $w={251}><NoticeLink href="#">Aviso de Cookies</NoticeLink></NoticeSlot>
        <NoticeSlot $w={250}><NoticeLink href="#">Aviso de Privacidade</NoticeLink></NoticeSlot>
        <OpenWindow>Faturas</OpenWindow>
        <Divider />
      </NoticeBar>
      <StatusBar>
        <StatusCell $w={380}>IP Servidor: 10.0.17.6 conecta_qa</StatusCell>
        <StatusCell $w={298}>
          <span>Operador: KATHIA DOC</span>
          <span>ID: 43</span>
          <span>Administrador: Sim</span>
        </StatusCell>
        <StatusCell>Meu IP: 192.168.3.17</StatusCell>
        <svg width="13" height="13" stroke="#a0a0a0" aria-hidden="true"><path d="M1 13L13 1M5 13l8-8M9 13l4-4" strokeWidth="1.500" /></svg>
      </StatusBar>

      <RowMark>
        <Mark>4.</Mark>
        <svg width="22" height="17" fill={GREEN} aria-hidden="true"><path d="M1 3h10V1l3-1 8 8.500L14 17l-3-1v-2H1z" /></svg>
      </RowMark>

      <Dialog role="dialog" aria-label="Selecione o Tipo de Impressão">
        <DialogTitle>
          <Logo />
          <span>Selecione o Tipo de Impressão</span>
          <DialogClose aria-label="Fechar"><Close color="#111" /></DialogClose>
        </DialogTitle>
        <DialogBody>
          <DialogArt>
            <BigPrinter />
            Impressão
          </DialogArt>
          <DialogRule />
          <DialogRight>
            <DialogPanel>
              <Group $h={152} $top={12} $left={14}>
                <Legend $left={-8}>Tipos de Impressão</Legend>
                <Options>
                  {["Fatura", "Relatório de Produtos", "Duplicata Mercantil", "Outros Tipos"].map((t, i) => (
                    <OptionLine key={t}>
                      <OptionFrame $on={i === 0}>
                        <RadioLabel>
                          <RadioInput type="radio" name="impressao" defaultChecked={i === 0} />
                          <OptionText $on={i === 0}>{t}</OptionText>
                        </RadioLabel>
                      </OptionFrame>
                      {i === 0 && <Mark>6.</Mark>}
                    </OptionLine>
                  ))}
                </Options>
              </Group>
            </DialogPanel>
            <DialogButtons>
              <FlatButton>Cancelar</FlatButton>
              <FlatButton>Imprimir</FlatButton>
            </DialogButtons>
          </DialogRight>
        </DialogBody>
        <PrintMark>
          <Mark>6.1.</Mark>
          <svg width="26" height="26" fill={GREEN} aria-hidden="true"><path d="M6 0h13v10h6l1 3-13 13L0 13l1-3h5z" /></svg>
        </PrintMark>
      </Dialog>
    </Window>
  );
}
